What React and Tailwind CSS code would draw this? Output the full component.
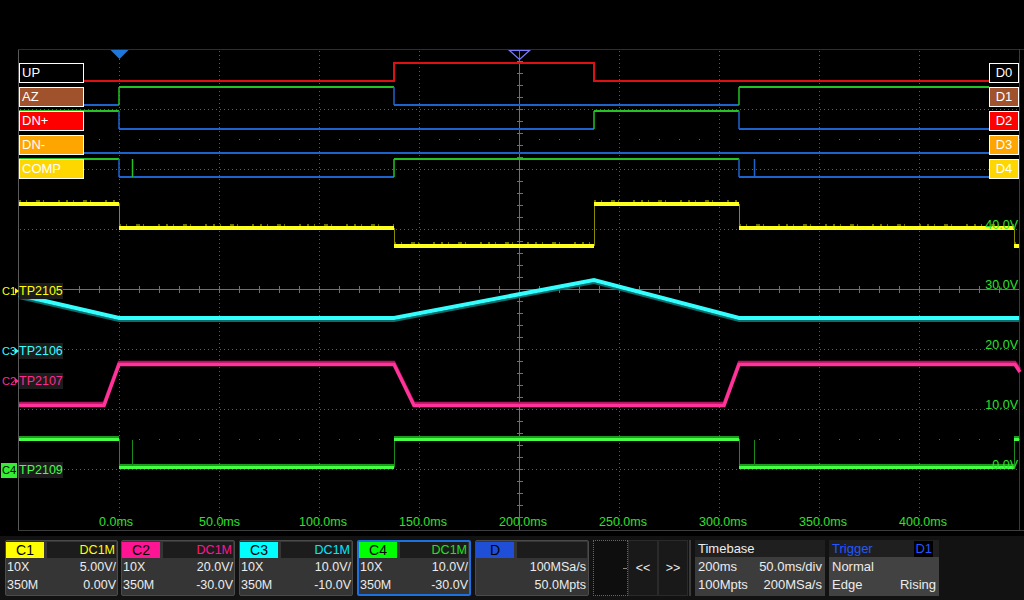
import React from "react";

const FONT = "'Liberation Sans', Arial, sans-serif";

const HI = "#22c322";
const LO = "#1c64cc";

const GX = [119, 219, 319, 419, 619, 719, 819, 919];
const GY = [109, 169, 229, 349, 409, 469];

// digital channels D1..D4 (D0 is drawn in red on its own)
const DIG = [
  { y: 87, segs: [[19, 119, 0], [119, 394, 1], [394, 739, 0], [739, 989, 1]] },
  { y: 111, segs: [[19, 119, 1], [119, 594, 0], [594, 739, 1], [739, 989, 0]] },
  { y: 135, segs: [[19, 989, 0]] },
  { y: 159, segs: [[19, 119, 1], [119, 394, 0], [394, 739, 1], [739, 989, 0]] },
];

const DLABELS = [
  { t: "UP", d: "D0", bg: "bg-black" },
  { t: "AZ", d: "D1", bg: "bg-[#a0522d]" },
  { t: "DN+", d: "D2", bg: "bg-[#ff0000]" },
  { t: "DN-", d: "D3", bg: "bg-[#ffa500]" },
  { t: "COMP", d: "D4", bg: "bg-[#ffd700]" },
];

const TIMES = ["0.0ms", "50.0ms", "100.0ms", "150.0ms", "200.0ms", "250.0ms", "300.0ms", "350.0ms", "400.0ms"];
const VOLTS = [["40.0V", 229], ["30.0V", 289], ["20.0V", 349], ["10.0V", 409], ["0.0V", 469]];

function Grid() {
  const dots = [];
  [139, 439].forEach((y) => {
    for (let i = 0; i <= 50; i++) dots.push(<rect key={y + "-" + i} x={19 + 20 * i} y={y} width={1} height={1} fill="#6a6a6a" />);
  });
  return (
    <g>
      <line x1={18.5} y1={49} x2={18.5} y2={531} stroke="#5a5a5a" />
      <line x1={18} y1={49.5} x2={1024} y2={49.5} stroke="#2e2e2e" />
      <line x1={1019.5} y1={49} x2={1019.5} y2={531} stroke="#3a3a3a" />
      <line x1={18} y1={530.5} x2={1024} y2={530.5} stroke="#3e3e3e" />
      {GX.map((x) => (
        <line key={"v" + x} x1={x + 0.5} y1={51} x2={x + 0.5} y2={530} stroke="#5e5e5e" strokeDasharray="1 3" />
      ))}
      {GY.map((y) => (
        <line key={"h" + y} x1={20} y1={y + 0.5} x2={1019} y2={y + 0.5} stroke="#5e5e5e" strokeDasharray="1 3" />
      ))}
      {dots}
      <line x1={519.5} y1={50} x2={519.5} y2={530} stroke="#707070" />
      {Array.from({ length: 39 }, (_, i) => (
        <line key={"t" + i} x1={517} x2={523} y1={61.5 + 12 * i} y2={61.5 + 12 * i} stroke="#707070" />
      ))}
      <line x1={19} y1={289.5} x2={1019} y2={289.5} stroke="#707070" />
      {Array.from({ length: 50 }, (_, i) => (
        <line key={"u" + i} x1={19.5 + 20 * i} x2={19.5 + 20 * i} y1={286} y2={293} stroke="#707070" />
      ))}
      <polygon points="110.5,50 128.5,50 119.5,59" fill="#1e78dc" />
      <polygon points="509.5,50.5 529.5,50.5 519.5,59.5" fill="none" stroke="#7a7aff" strokeWidth={1.2} />
    </g>
  );
}

function Digital() {
  const els = [];
  DIG.forEach((ch, ci) => {
    ch.segs.forEach(([a, b, l], si) => {
      const yy = l ? ch.y : ch.y + 18;
      const c = l ? HI : LO;
      els.push(<line key={ci + "-" + si} x1={a} x2={b} y1={yy} y2={yy} stroke={c} strokeWidth={2} />);
      if (si > 0) els.push(<line key={ci + "-" + si + "v"} x1={a} x2={a} y1={ch.y} y2={ch.y + 18} stroke={c} strokeWidth={1.5} />);
    });
  });
  return (
    <g>
      <polyline points="19,81 394,81 394,63 594,63 594,81 989,81" fill="none" stroke="#dd1111" strokeWidth={2} />
      {els}
      <line x1={132.5} x2={132.5} y1={159} y2={177} stroke={HI} strokeWidth={1.5} />
      <line x1={754.5} x2={754.5} y1={159} y2={177} stroke={LO} strokeWidth={1.5} />
      <line x1={989} x2={994} y1={105} y2={105} stroke={HI} strokeWidth={2} strokeDasharray="1 1" />
    </g>
  );
}

function Analog() {
  const yel = [[19, 119, 204], [119, 394, 228], [394, 594, 246], [594, 739, 204], [739, 1014, 228], [1014, 1019, 246]];
  const grn = [[19, 119, 439.5], [119, 394, 467.5], [394, 739, 439.5], [739, 1014, 467.5], [1014, 1019, 439.5]];
  return (
    <g>
      {/* C1 yellow */}
      {yel.map(([a, b, y], i) => (
        <g key={"y" + i}>
          <line x1={a} x2={b} y1={y - 3} y2={y - 3} stroke="#6e6e00" strokeWidth={2} strokeDasharray="2 5 1 9 4 3 1 14 2 6" />
          {i > 0 && <line x1={a + 0.5} x2={a + 0.5} y1={Math.min(y, yel[i - 1][2])} y2={Math.max(y, yel[i - 1][2])} stroke="#8a8a00" />}
          <line x1={a} x2={b} y1={y} y2={y} stroke="#ffff1e" strokeWidth={4} />
        </g>
      ))}
      {/* C3 cyan */}
      <polyline points="19,298 119,321 394,321 594,283 739,321 1019,321" fill="none" stroke="#0c6b6b" strokeWidth={2} />
      <polyline points="19,295 119,318 394,318 594,280 739,318 1019,318" fill="none" stroke="#33ffff" strokeWidth={4} />
      {/* C2 pink */}
      <polyline points="19,403 104,403 119,362 394,362 414,403 724,403 739,362 1015,362 1020,369" fill="none" stroke="#b3145f" strokeWidth={2.5} />
      <polyline points="19,405.5 104,405.5 119,364.5 394,364.5 414,405.5 724,405.5 739,364.5 1015,364.5 1020,372" fill="none" stroke="#ff3399" strokeWidth={3.5} />
      {/* C4 green */}
      {grn.map(([a, b, y], i) => (
        <g key={"g" + i}>
          {i > 0 && <line x1={a + 0.5} x2={a + 0.5} y1={Math.min(y, grn[i - 1][2])} y2={Math.max(y, grn[i - 1][2])} stroke="#1c8a1c" />}
          <line x1={a} x2={b} y1={y - 2.5} y2={y - 2.5} stroke="#1e9a1e" strokeWidth={2} />
          <line x1={a} x2={b} y1={y} y2={y} stroke="#44ff44" strokeWidth={3} />
        </g>
      ))}
      <line x1={132.5} x2={132.5} y1={440} y2={466} stroke="#1c8a1c" />
      <line x1={754.5} x2={754.5} y1={440} y2={466} stroke="#1c8a1c" />
    </g>
  );
}

function AxisText() {
  return (
    <g fontFamily={FONT} fontSize={12.5} fill="#2ee02e">
      {TIMES.map((t, i) => (
        <text key={t} x={99 + 100 * i} y={525.5}>{t}</text>
      ))}
      {VOLTS.map(([t, y]) => (
        <text key={t} x={1018} y={y} textAnchor="end">{t}</text>
      ))}
    </g>
  );
}

function Screen() {
  return (
    <div className="relative h-[531px]">
      <svg width="1024" height="531" className="block">
        <Grid />
        <Digital />
        <Analog />
        <AxisText />
      </svg>

      <div className="absolute left-[19px] top-[63px] flex flex-col gap-[4px]">
        {DLABELS.map((l) => (
          <div key={l.t} className={"w-[65px] h-[20px] border border-white pl-[2px] leading-[18px] text-[13px] text-white " + l.bg}>
            {l.t}
          </div>
        ))}
      </div>
      <div className="absolute left-[989px] top-[63px] flex flex-col gap-[4px]">
        {DLABELS.map((l) => (
          <div key={l.d} className={"w-[30px] h-[20px] border border-white text-center leading-[18px] text-[13px] text-white " + l.bg}>
            {l.d}
          </div>
        ))}
      </div>

      <div className="absolute left-[2px] top-[283px] flex items-center h-[16px]">
        <span className="text-[11px] text-[#ffff00] w-[13px]">C1</span>
        <span className="w-0 h-0 border-y-[3px] border-y-transparent border-l-[4px] border-l-[#ffff00]" />
        <span className="bg-[#1c1c1c] text-[#ffff00] text-[12.5px] h-[16px] leading-[16px] w-[44px]">TP2105</span>
      </div>
      <div className="absolute left-[2px] top-[343px] flex items-center h-[16px]">
        <span className="text-[11px] text-[#33ffff] w-[13px]">C3</span>
        <span className="w-0 h-0 border-y-[3px] border-y-transparent border-l-[4px] border-l-[#33ffff]" />
        <span className="bg-[#1c1c1c] text-[#33ffff] text-[12.5px] h-[16px] leading-[16px] w-[44px]">TP2106</span>
      </div>
      <div className="absolute left-[2px] top-[373px] flex items-center h-[16px]">
        <span className="text-[11px] text-[#ff2a90] w-[13px]">C2</span>
        <span className="w-0 h-0 border-y-[3px] border-y-transparent border-l-[4px] border-l-[#ff2a90]" />
        <span className="bg-[#1c1c1c] text-[#ff2a90] text-[12.5px] h-[16px] leading-[16px] w-[44px]">TP2107</span>
      </div>
      <div className="absolute left-[1px] top-[462px] flex items-center h-[16px]">
        <span className="bg-[#33ee33] text-black text-[11px] w-[16px] h-[15px] leading-[15px] text-center mr-[2px]">C4</span>
        <span className="bg-[#1c1c1c] text-[#44ff44] text-[12.5px] h-[16px] leading-[16px] w-[44px]">TP2109</span>
      </div>
    </div>
  );
}

const CH = [
  { n: "C1", badge: "bg-[#ffff00]", txt: "text-[#ffff00]", v: "5.00V/", o: "0.00V", w: "w-[113px]" },
  { n: "C2", badge: "bg-[#ff1493]", txt: "text-[#ff1493]", v: "20.0V/", o: "-30.0V", w: "w-[114px]" },
  { n: "C3", badge: "bg-[#00ffff]", txt: "text-[#00eaff]", v: "10.0V/", o: "-10.0V", w: "w-[114px]" },
  { n: "C4", badge: "bg-[#00ff00]", txt: "text-[#22e022]", v: "10.0V/", o: "-30.0V", w: "w-[114px]", sel: true },
];

function ChanPanel({ c }) {
  const frame = c.sel ? "border-2 border-[#1e6fe0]" : "border border-[#4b4b4b] pt-[1px] pl-0";
  return (
    <div className={"h-[56px] rounded-[2px] bg-[#353535] flex flex-col " + c.w + " " + frame}>
      <div className="flex gap-[3px] h-[16px] pr-[1px]">
        <div className={"w-[38px] text-black text-[14px] flex items-center justify-center " + c.badge}>{c.n}</div>
        <div className={"flex-1 bg-[#1c1c1c] flex items-center justify-end pr-[1px] " + c.txt}>DC1M</div>
      </div>
      <div className="flex justify-between px-[1px] h-[18px] items-center text-[#ececec]">
        <span>10X</span>
        <span>{c.v}</span>
      </div>
      <div className="flex justify-between px-[1px] h-[18px] items-center text-[#ececec]">
        <span>350M</span>
        <span>{c.o}</span>
      </div>
    </div>
  );
}

function BottomBar() {
  return (
    <div className="flex-1 bg-[#121212] border-t-[5px] border-black flex items-start pt-[4px] pl-[5px] gap-[4px]">
      {CH.map((c, i) => (
        <div key={c.n} className={i === 1 ? "-ml-[1px]" : ""}>
          <ChanPanel c={c} />
        </div>
      ))}

      <div className="w-[114px] h-[56px] rounded-[2px] bg-[#353535] border border-[#4b4b4b] pt-[1px] flex flex-col">
        <div className="flex gap-[3px] h-[16px] pr-[1px]">
          <div className="w-[38px] bg-[#1f4fd6] text-black text-[14px] flex items-center justify-center">D</div>
          <div className="flex-1 bg-[#1c1c1c]" />
        </div>
        <div className="flex justify-end px-[2px] h-[18px] items-center text-[#ececec]">100MSa/s</div>
        <div className="flex justify-end px-[2px] h-[18px] items-center text-[#ececec]">50.0Mpts</div>
      </div>

      <div className="flex h-[56px]">
        <div className="w-[35px] h-full bg-[#0e0e0e] border border-dotted border-[#666] flex items-center justify-end">
          <div className="w-[4px] h-[1px] bg-[#888]" />
        </div>
        <div className="w-[30px] h-full bg-[#191919] border border-[#2a2a2a] flex items-center justify-center text-[#ececec]">&lt;&lt;</div>
        <div className="w-[30px] h-full bg-[#191919] border border-[#2a2a2a] flex items-center justify-center text-[#ececec]">&gt;&gt;</div>
        <div className="w-[2px] h-full bg-[#3a3a3a] ml-[1px]" />
      </div>

      <div className="w-[130px] h-[56px] bg-[#3c3c3c] flex flex-col">
        <div className="h-[17px] bg-[#1f1f1f] flex items-center px-[3px] text-[#ececec] text-[13px]">Timebase</div>
        <div className="flex justify-between px-[3px] h-[18px] items-center text-[#ececec] text-[13px]">
          <span>200ms</span>
          <span>50.0ms/div</span>
        </div>
        <div className="flex justify-between px-[3px] h-[18px] items-center text-[#ececec] text-[13px]">
          <span>100Mpts</span>
          <span>200MSa/s</span>
        </div>
      </div>

      <div className="w-[110px] h-[56px] bg-[#424242] flex flex-col">
        <div className="h-[17px] bg-[#1f1f1f] flex items-center justify-between pl-[3px] pr-[6px] text-[#2358ff] text-[13px]">
          <span>Trigger</span>
          <span className="bg-black h-[16px] px-[1px] flex items-center">D1</span>
        </div>
        <div className="flex px-[3px] h-[18px] items-center text-[#ececec] text-[13px]">Normal</div>
        <div className="flex justify-between px-[3px] h-[18px] items-center text-[#ececec] text-[13px]">
          <span>Edge</span>
          <span>Rising</span>
        </div>
      </div>
    </div>
  );
}

export default function App() {
  return (
    <div className="w-[1024px] h-[600px] bg-black flex flex-col overflow-hidden font-['Liberation_Sans',Arial,sans-serif] text-[12.5px] leading-none">
      <Screen />
      <BottomBar />
    </div>
  );
}
